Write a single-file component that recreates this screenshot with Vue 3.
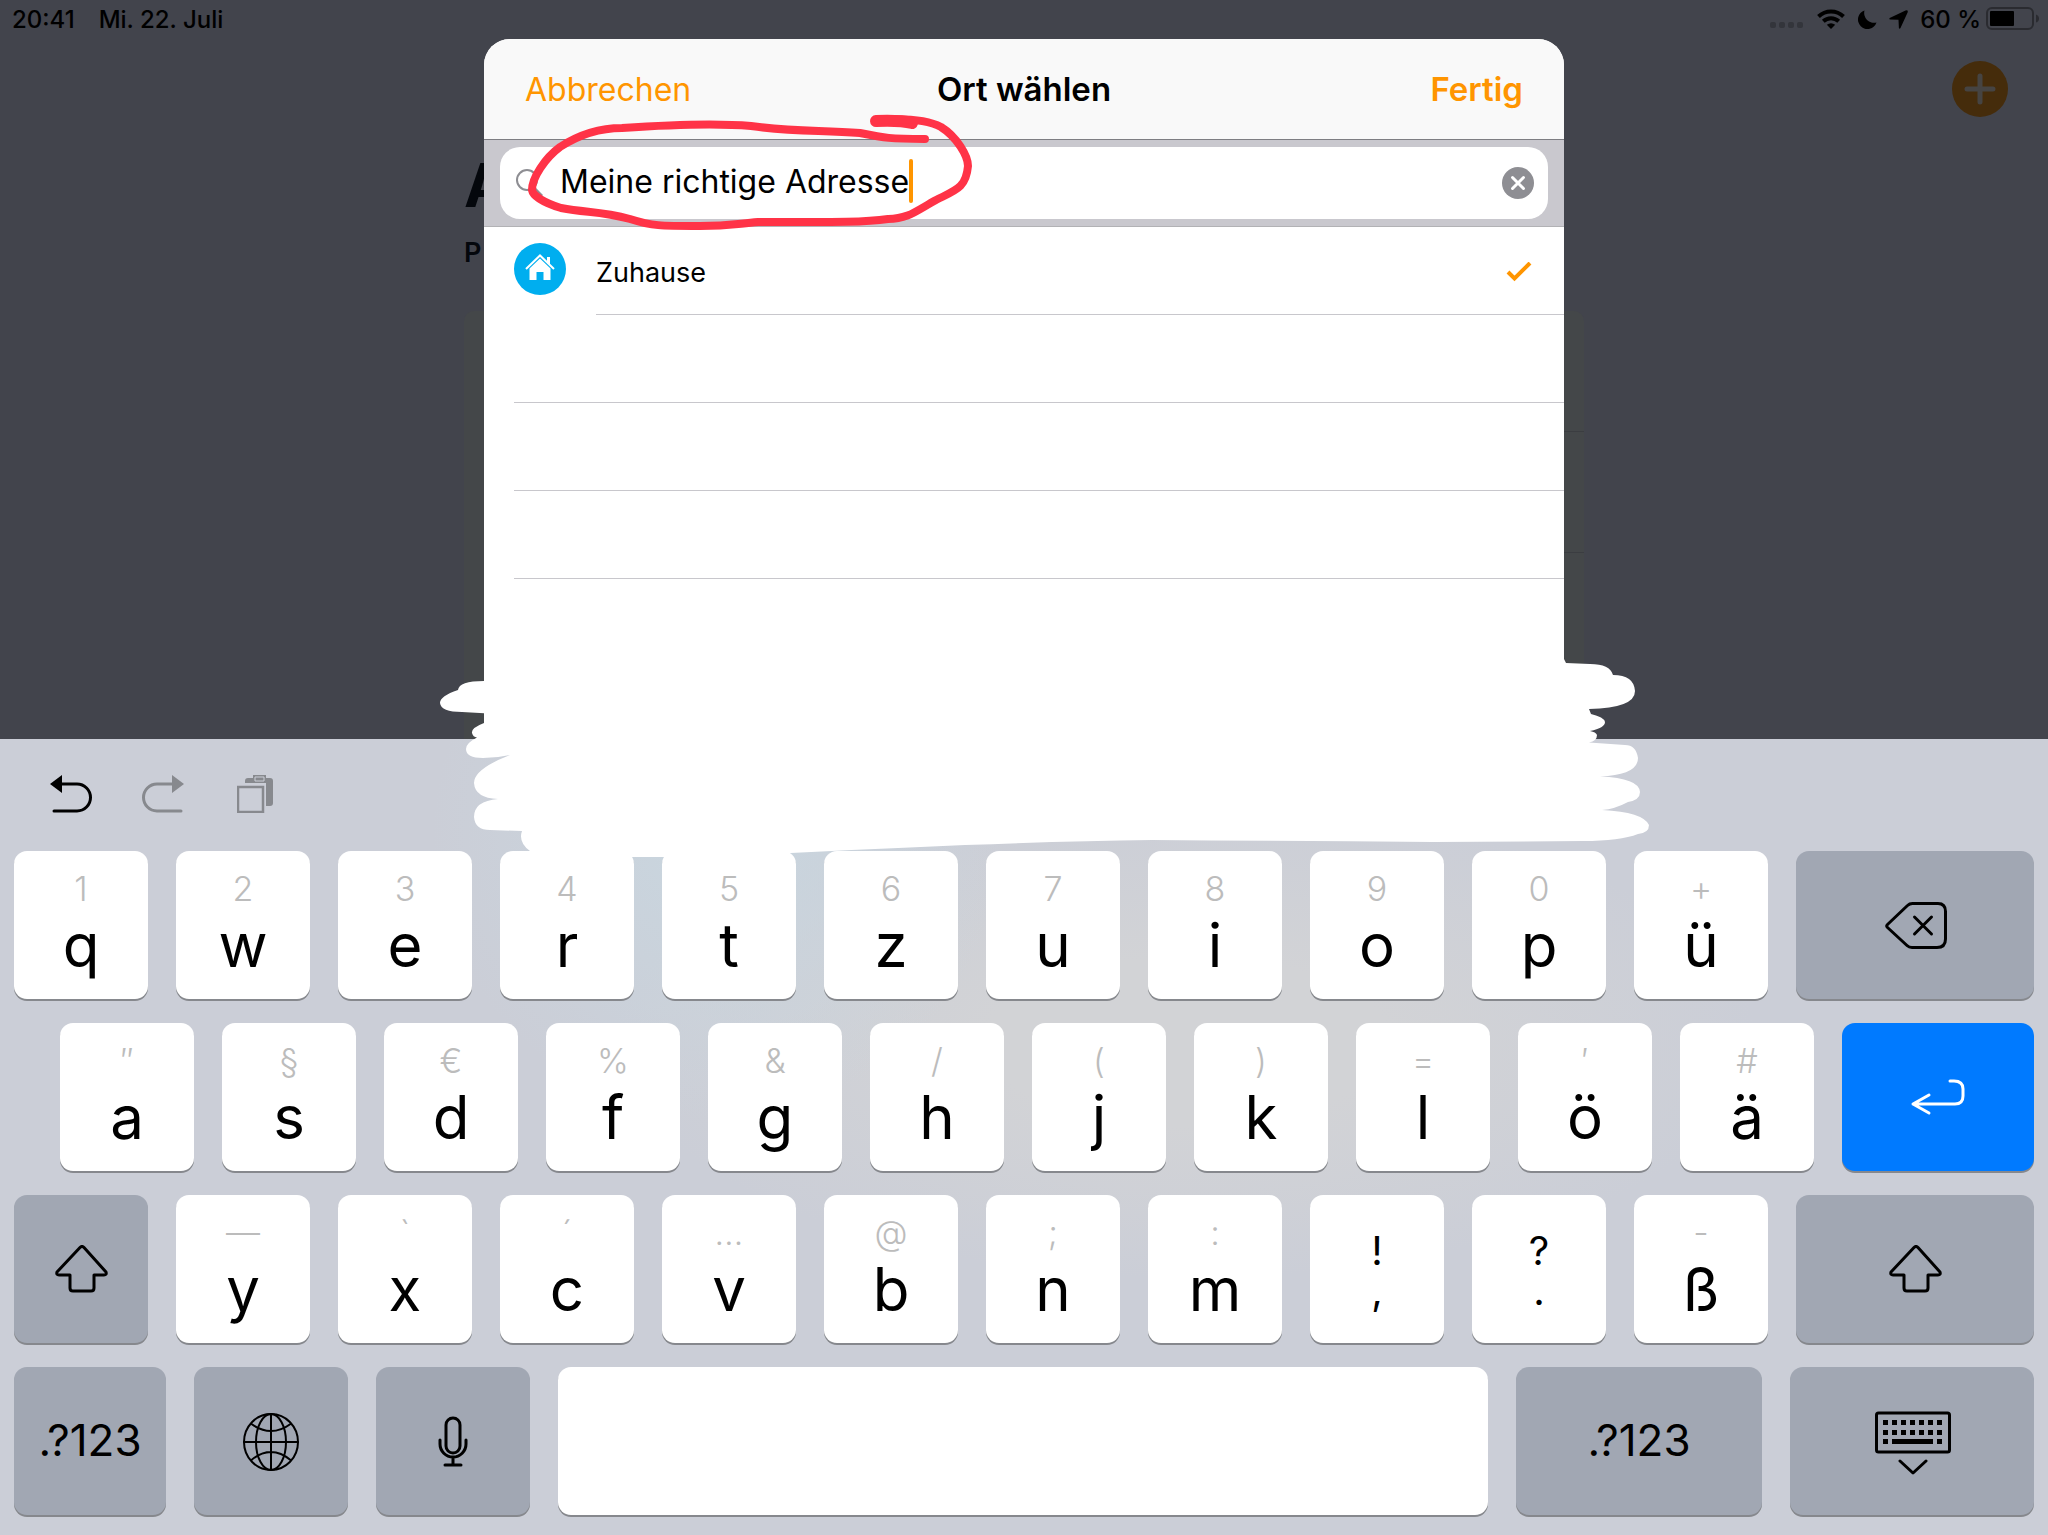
<script setup>
import { ref } from 'vue'

const query = ref('Meine richtige Adresse')

const letters = (labels, hints) =>
  labels.split(' ').map((label, i) => ({ kind: 'letter', label, hint: hints.split(' ')[i], grow: 134 }))

const rows = [
  [
    ...letters('q w e r t z u i o p ü', '1 2 3 4 5 6 7 8 9 0 +'),
    { kind: 'delete', name: 'Löschen', grow: 238, tone: 'grey' },
  ],
  [
    ...letters('a s d f g h j k l ö ä', '″ § € % & / ( ) = ′ #'),
    { kind: 'return', name: 'Eingabe', grow: 192, tone: 'blue' },
  ],
  [
    { kind: 'shift', name: 'Umschalttaste links', grow: 134, tone: 'grey' },
    ...letters('y x c v b n m', '— ` ´ … @ ; :'),
    { kind: 'pair', label: ',', hint: '!', grow: 134 },
    { kind: 'pair', label: '.', hint: '?', grow: 134 },
    ...letters('ß', '-'),
    { kind: 'shift', name: 'Umschalttaste rechts', grow: 238, tone: 'grey' },
  ],
  [
    { kind: 'text', label: '.?123', grow: 152, tone: 'grey' },
    { kind: 'globe', name: 'Sprache wechseln', grow: 154, tone: 'grey' },
    { kind: 'mic', name: 'Diktieren', grow: 154, tone: 'grey' },
    { kind: 'space', name: 'Leerzeichen', grow: 930 },
    { kind: 'text', label: '.?123', grow: 246, tone: 'grey' },
    { kind: 'hide', name: 'Tastatur ausblenden', grow: 244, tone: 'grey' },
  ],
]
const smallKeys = [0, 1, 2, 3, 4, 5, 6]
</script>

<template>
  <div class="screen">
    <div class="backdrop">
      <header class="status">
        <span class="time">20:41</span>
        <span>Mi. 22. Juli</span>
        <svg class="dots" width="34" height="6" viewBox="0 0 34 6" fill="#33353b">
          <rect v-for="i in 4" :key="i" :x="(i - 1) * 9" width="6" height="6" rx="2" />
        </svg>
        <svg class="wifi" width="28" height="20" viewBox="0 0 28 20" fill="none" stroke="#000" stroke-width="4">
          <path d="M1.500 7.500C8.500 .8 19.500 .8 26.500 7.500" />
          <path d="M6.300 12.300C10.700 8.200 17.300 8.200 21.700 12.300" />
          <path d="M14 20L9.800 15.800Q14 12.600 18.200 15.800Z" fill="#000" stroke="none" />
        </svg>
        <svg class="moon" width="19" height="19" viewBox="0 0 19 19">
          <path d="M6.500 .5A9.500 9.500 0 1 0 18.500 12.500A9.800 9.800 0 0 1 6.500 .5Z" />
        </svg>
        <svg class="arrow" width="19" height="19" viewBox="0 0 19 19">
          <path d="M18.500 .5Q17.500 0 16.500 .5L.7 8Q-.2 9 1 9.500L9.500 9.700L9.900 18Q10.500 19.500 11.500 18L18.600 2.500Q19 1.200 18.500 .5Z" />
        </svg>
        <span>60 %</span>
        <svg class="battery" width="54" height="24" viewBox="0 0 54 24">
          <rect x="1" y="1" width="46" height="21" rx="5" fill="none" stroke="#2a2b30" stroke-width="2" />
          <rect x="4" y="4" width="24" height="15" rx="1" />
          <path d="M50 7.500Q53 8.500 53 11.500T50 15.500Z" fill="#2a2b30" />
        </svg>
      </header>
      <button class="add" aria-label="Hinzufügen">
        <svg width="32" height="32" viewBox="0 0 32 32" stroke="#464442" stroke-width="5" stroke-linecap="round">
          <path d="M16 3V29M3 16H29" />
        </svg>
      </button>
      <main class="behind">
        <h1>A</h1>
        <h2>P</h2>
        <div class="card"><div></div><div></div><div></div></div>
      </main>
    </div>

    <section class="dialog" role="dialog" aria-labelledby="dialog-title">
      <header class="bar">
        <button class="action">Abbrechen</button>
        <h2 id="dialog-title">Ort wählen</h2>
        <button class="action done">Fertig</button>
      </header>
      <div class="search">
        <label class="field">
          <svg width="28" height="28" viewBox="0 0 28 28" fill="none" stroke="#8e8e93">
            <circle cx="12" cy="11" r="10" stroke-width="2" />
            <path d="M19 19L27 27" stroke-width="3" />
          </svg>
          <input v-model="query" type="text" aria-label="Ort suchen" />
          <i class="caret"></i>
          <button class="clear" aria-label="Text löschen" @click="query = ''">
            <svg width="32" height="32" viewBox="0 0 32 32">
              <circle cx="16" cy="16" r="16" fill="#8e8e93" />
              <path d="M10.500 10.500L21.500 21.500M21.500 10.500L10.500 21.500" stroke="#fff" stroke-width="3" stroke-linecap="round" />
            </svg>
          </button>
        </label>
      </div>
      <ul class="places">
        <li class="place">
          <svg class="home" width="52" height="52" viewBox="0 0 52 52">
            <circle cx="26" cy="26" r="26" fill="#00aeef" />
            <path d="M12 26L26 12.500L40 26" fill="none" stroke="#fff" stroke-width="2" />
            <path d="M33 14H36V22L33 19Z" fill="#fff" />
            <path d="M26 15.500L36.500 25.500V37H29.500V29H22.500V37H15.500V25.500Z" fill="#fff" />
          </svg>
          <span class="name">
            Zuhause
            <svg width="26" height="22" viewBox="0 0 26 22" fill="none" stroke="#ff9500" stroke-width="4">
              <path d="M2 10L8.500 16.500L24 1" />
            </svg>
          </span>
        </li>
        <li class="empty"></li>
        <li class="empty"></li>
        <li class="empty"></li>
      </ul>
    </section>

    <section class="keyboard" aria-label="Tastatur">
      <div class="tools">
        <button aria-label="Widerrufen">
          <svg width="43" height="38" viewBox="0 0 43 38">
            <path d="M10 9H27A13.500 13.500 0 0 1 27 36H4" fill="none" stroke="#000" stroke-width="3" stroke-linecap="round" />
            <path d="M0 9L12 0V18Z" />
          </svg>
        </button>
        <button aria-label="Wiederholen">
          <svg width="43" height="38" viewBox="0 0 43 38">
            <path d="M33 9H15A13.500 13.500 0 0 0 15 36H39" fill="none" stroke="#87898e" stroke-width="3" stroke-linecap="round" />
            <path d="M42 9L30 0V18Z" fill="#87898e" />
          </svg>
        </button>
        <button class="paste" aria-label="Einsetzen">
          <svg width="36" height="38" viewBox="0 0 36 38">
            <path d="M8 8V6Q8 3 11 3H16V0H29V3H33Q36 3 36 6V28Q36 31 33 31H29V8Z" fill="#87898e" />
            <path d="M18 2H27V6H18Z" fill="none" stroke="#cbced7" stroke-width="1" />
            <rect x="1" y="12" width="25" height="25" fill="none" stroke="#87898e" stroke-width="2.500" />
          </svg>
        </button>
      </div>

      <div v-for="(row, r) in rows" :key="r" class="row" :class="{ inset: r === 1 }">
        <button
          v-for="(key, k) in row"
          :key="k"
          class="key"
          :class="[key.kind, key.tone]"
          :style="{ flexGrow: key.grow }"
          :aria-label="key.name"
        >
          <span v-if="key.hint" class="hint">{{ key.hint }}</span>
          <span v-if="key.label" class="label">{{ key.label }}</span>

          <svg v-if="key.kind === 'delete'" width="64" height="48" viewBox="0 0 64 48" class="icon">
            <path d="M24.500 4.500Q26.500 2.500 29.500 2.500H55Q62.500 2.500 62.500 10.500V38Q62.500 46.500 54 46.500H29Q26 46.500 24 44.500L4.500 26.500Q3 25 4.500 23.500Z" />
            <path d="M31.500 16L48.500 33M48.500 16L31.500 33" />
          </svg>
          <svg v-else-if="key.kind === 'return'" width="56" height="38" viewBox="0 0 56 38" class="icon">
            <path d="M40 3H44Q53 3 53 11V18Q53 26 45 26H3M19 17L3 26L19 35" />
          </svg>
          <svg v-else-if="key.kind === 'shift'" width="54" height="48" viewBox="0 0 54 48" class="icon">
            <path d="M26 2.500Q28 .5 30 2.500L52 27Q53 30 50 30H40V43Q40 46 37 46H19Q16 46 16 43V30H5Q2 30 3 27Z" />
          </svg>
          <svg v-else-if="key.kind === 'globe'" width="58" height="60" viewBox="0 0 58 60" class="icon thin">
            <ellipse cx="29" cy="31" rx="27" ry="28" />
            <ellipse cx="29" cy="31" rx="15" ry="28" />
            <path d="M29 3V59M2 31H56M9.500 13Q19 20 29 20T48.500 13M9.500 49Q19 41 29 41T48.500 49" />
          </svg>
          <svg v-else-if="key.kind === 'mic'" width="30" height="52" viewBox="0 0 30 52" class="icon">
            <rect x="8" y="3" width="14" height="35" rx="7" />
            <path d="M2 25V29A13 13 0 0 0 28 29V25M15 43V49M7 50H23" />
          </svg>
          <svg v-else-if="key.kind === 'hide'" width="78" height="68" viewBox="0 0 78 68" class="icon">
            <rect x="3.500" y="6" width="73" height="39" rx="2" />
            <g fill="#000" stroke="none">
              <rect v-for="i in smallKeys" :key="'a' + i" :x="10 + i * 9" y="13" width="5" height="5" />
              <rect v-for="i in smallKeys" :key="'b' + i" :x="10 + i * 9" y="23" width="5" height="5" />
              <path d="M10 32H15V37H10ZM19 32H60V37H19ZM64 32H69V37H64Z" />
            </g>
            <path d="M27 54L40 66L53 54" />
          </svg>
        </button>
      </div>
    </section>

    <svg class="ink" width="1260" height="900" viewBox="394 0 1260 900">
      <path
        fill="#fff"
        d="M484 681Q459 681 458 690Q440 696 440 703Q441 712 462 712Q480 713 497 714Q484 719 484 723Q471 728 472 733Q473 737 477 737.500
        Q466 743 466 749Q466 758 483 758Q497 758 510 755Q474 769 474 783Q475 798 498 799Q474 801 474 817Q475 830 490 830L522 831Q518 842 530 851
        L560 857H740L791 853Q1000 842 1152 840Q1290 841 1433 842L1583 841Q1620 841 1638 834Q1649 833 1649 825Q1643 812 1602 810Q1615 809 1628 802
        Q1640 800 1640 792Q1639 778 1600 776.500Q1638 775 1638 758Q1636 745 1625 745L1589 742.500Q1597 741 1597 735Q1596 732 1590 731Q1605 728 1605 722Q1604 717 1591 714
        L1589 709Q1635 708 1635 691Q1634 675 1613 675Q1610 664 1590 664L1566 663L1564 659V640H484Z"
      />
      <g fill="none" stroke="#ff3347" stroke-linecap="round" stroke-linejoin="round">
        <path stroke-width="12" d="M876 121Q900 120 912 123" />
        <path
          stroke-width="8"
          d="M876 120C905 118 928 120 941 127C957 137 968 156 968 166C966 188 956 190 936 200C916 211 908 219 888 219C860 223 820 222 758 222
          C735 224 728 226 700 226C660 226 652 226 630 219C600 211 588 213 561 208C545 203 533 196 532 190C532 178 545 158 560 147
          C580 134 600 128 622 128C680 124 716 123 751 126C793 132 820 130 860 133C885 138 890 139 925 139"
        />
      </g>
    </svg>
  </div>
</template>

<style>
body {
  margin: 0;
}
</style>

<style scoped>
.screen {
  position: relative;
  display: flex;
  flex-direction: column;
  min-height: 100vh;
  overflow: hidden;
  background: #42444c;
  color: #000;
  font-family: Inter, "Liberation Sans", sans-serif;
}
button {
  padding: 0;
  border: 0;
  background: none;
  color: inherit;
  font: inherit;
}
h1,
h2,
ul {
  margin: 0;
  padding: 0;
  list-style: none;
}
svg {
  display: block;
  flex: none;
}

.backdrop {
  display: flex;
  flex-direction: column;
  flex: 1;
}
.status {
  display: flex;
  align-items: center;
  height: 38px;
  padding: 0 8px 0 12px;
  font-size: 24px;
  font-weight: 500;
}
.time {
  margin-right: 24px;
}
.dots {
  margin: 12px 13px 0 auto;
}
.moon {
  margin-left: 13px;
}
.arrow {
  margin: 0 12px;
}
.battery {
  margin-left: 5px;
}
.add {
  display: grid;
  place-items: center;
  align-self: flex-end;
  width: 56px;
  height: 56px;
  margin: 23px 40px 0 0;
  border-radius: 50%;
  background: #452c0b;
}
.behind {
  display: flex;
  flex-direction: column;
  flex: 1;
  width: 1120px;
  max-width: 100%;
  margin: 0 auto;
  color: #04070c;
}
.behind h1 {
  margin-top: 32px;
  font-size: 60px;
  line-height: 72px;
}
.behind h2 {
  margin-top: 14px;
  font-size: 27px;
  font-weight: 600;
  line-height: 36px;
}
.card {
  flex: 1;
  margin-top: 40px;
  padding-left: 40px;
  border-radius: 10px 10px 0 0;
  background: #444749;
}
.card div {
  height: 120px;
  border-bottom: 1px solid #3b3d41;
}
.card div:last-child {
  border: 0;
}

.dialog {
  position: absolute;
  top: 39px;
  left: 0;
  right: 0;
  width: 1080px;
  max-width: 100%;
  height: 700px;
  margin: 0 auto;
  overflow: hidden;
  border-radius: 26px 26px 0 0;
  background: #fff;
}
.bar {
  display: grid;
  grid-template-columns: 1fr auto 1fr;
  align-items: center;
  height: 100px;
  padding: 0 41px;
  border-bottom: 1px solid #7e7e83;
  background: #f9f9f9;
  font-size: 32px;
}
.bar h2 {
  font-size: 33px;
  font-weight: 600;
}
.action {
  justify-self: start;
  color: #ff9500;
}
.done {
  justify-self: end;
  font-size: 33px;
  font-weight: 600;
}
.search {
  padding: 7px 16px;
  border-bottom: 1px solid #b2b2b5;
  background: #c9c8ce;
}
.field {
  display: flex;
  align-items: center;
  height: 72px;
  padding: 0 14px 0 15px;
  border-radius: 20px;
  background: #fff;
}
.field input {
  field-sizing: content;
  margin-left: 17px;
  padding: 0 0 4px;
  border: 0;
  outline: 0;
  background: none;
  color: #000;
  font: 32px Inter, "Liberation Sans", sans-serif;
}
.caret {
  width: 4px;
  height: 44px;
  margin-bottom: 4px;
  border-radius: 2px;
  background: #ff9500;
}
.clear {
  margin-left: auto;
}
.places {
  padding-left: 30px;
}
.place {
  display: flex;
  gap: 30px;
  height: 88px;
}
.home {
  margin-top: 16px;
}
.name {
  display: flex;
  flex: 1;
  align-items: center;
  justify-content: space-between;
  padding: 4px 32px 0 0;
  border-bottom: 1px solid #c8c7cc;
  font-size: 27px;
}
.empty {
  height: 87px;
  border-bottom: 1px solid #c8c7cc;
}

.keyboard {
  display: flex;
  flex-direction: column;
  gap: 24px;
  padding: 0 14px 20px;
  background:
    radial-gradient(circle at 35% 12%, #c9d6df 0, #c9d6df00 19%),
    radial-gradient(ellipse at 58% 38%, #d2d3d6 0, #d2d3d6 12%, #d2d3d600 34%),
    #cbced7;
}
.tools {
  display: flex;
  gap: 49px;
  align-items: flex-start;
  height: 52px;
  padding: 36px 36px 0;
}
.paste {
  margin-left: 3px;
}
.row {
  display: flex;
  gap: 28px;
}
.inset {
  padding-left: 46px;
}
.key {
  display: flex;
  flex: 1 1 0;
  flex-direction: column;
  align-items: center;
  min-width: 0;
  height: 148px;
  border-radius: 13px;
  background: #fff;
  box-shadow: 0 2px 0 #86888d;
}
.grey {
  justify-content: center;
  background: #a1a7b3;
}
.blue {
  justify-content: center;
  background: #007aff;
}
.letter {
  gap: 6px;
  padding-top: 20px;
}
.letter .hint {
  color: #bcbcbc;
  font-size: 34px;
  font-weight: 300;
  line-height: 36px;
}
.letter .label {
  font-size: 60px;
  line-height: 64px;
}
.pair {
  padding-top: 36px;
  font-size: 40px;
  line-height: 40px;
}
.text {
  padding-bottom: 3px;
  box-sizing: border-box;
  font-size: 44px;
}
.icon {
  fill: none;
  stroke: #000;
  stroke-width: 3;
  stroke-linecap: round;
  stroke-linejoin: round;
}
.blue .icon {
  stroke: #fff;
}
.thin {
  stroke-width: 2;
}

.ink {
  position: absolute;
  top: 0;
  left: 50%;
  transform: translateX(-50%);
  pointer-events: none;
}
</style>
